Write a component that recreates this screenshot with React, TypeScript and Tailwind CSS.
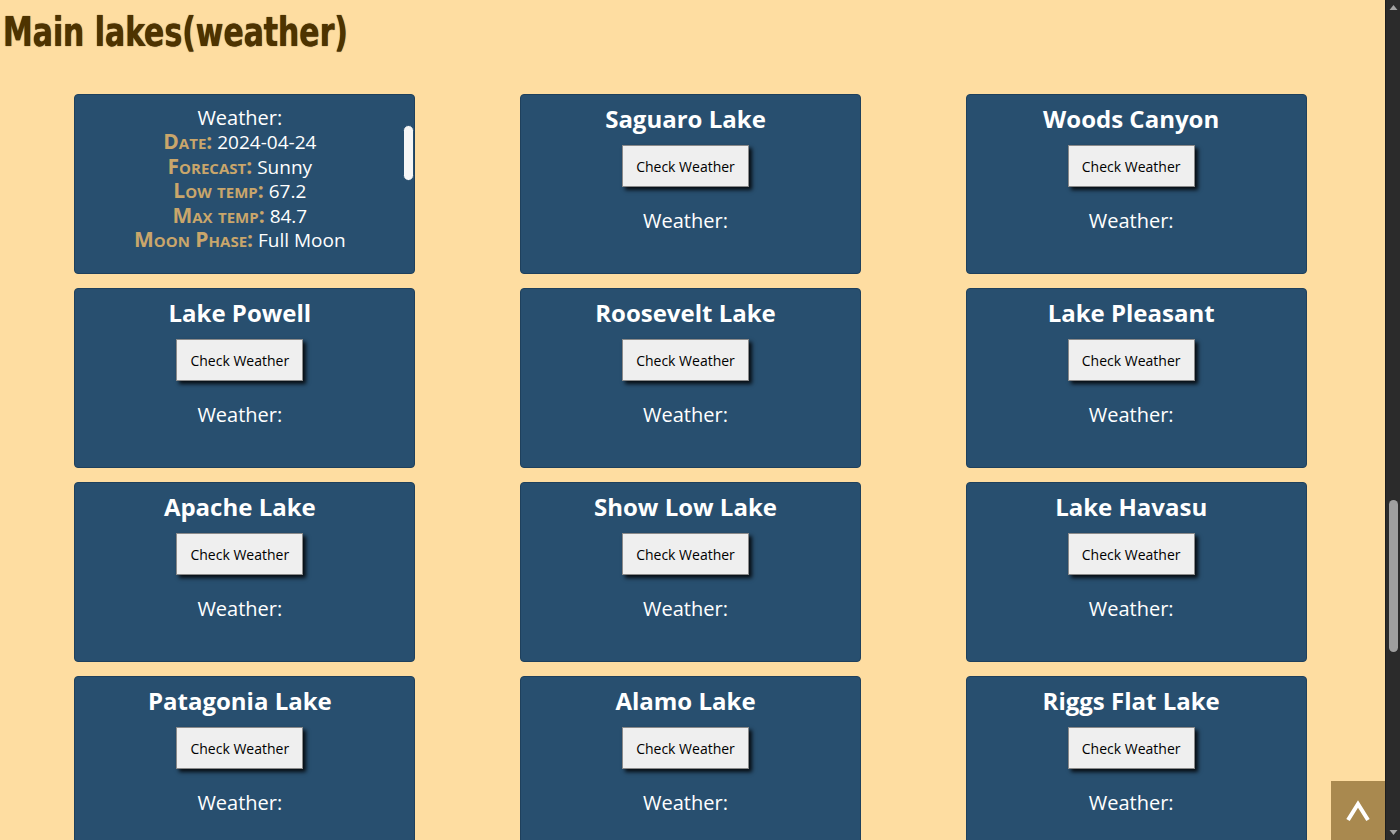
import { useEffect, useRef } from 'react';

const lakes = [
  'Canyon Lake',
  'Saguaro Lake',
  'Woods Canyon',
  'Lake Powell',
  'Roosevelt Lake',
  'Lake Pleasant',
  'Apache Lake',
  'Show Low Lake',
  'Lake Havasu',
  'Patagonia Lake',
  'Alamo Lake',
  'Riggs Flat Lake',
];

const forecast = [
  { date: '2024-04-24', sky: 'Sunny', low: '67.2', max: '84.7', moon: 'Full Moon' },
  { date: '2024-04-25', sky: 'Sunny', low: '65.8', max: '86.1', moon: 'Waning Gibbous' },
  { date: '2024-04-26', sky: 'Partly cloudy', low: '63.4', max: '81.9', moon: 'Waning Gibbous' },
];

const Label = ({ name, value }: { name: string; value: string }) => (
  <p className="text-[19px] leading-[24.5px]">
    <span className="text-[21px] leading-[1] font-bold text-[#c9a66b] [font-variant:small-caps]">{name}:</span>{' '}
    <span className="text-white">{value}</span>
  </p>
);

const LakeCard = ({ name, open }: { name: string; open?: boolean }) => {
  const ref = useRef<HTMLDivElement>(null);

  useEffect(() => {
    if (open && ref.current) ref.current.scrollTop = 103;
  }, [open]);

  return (
    <div className="relative h-[180px] w-[341px]">
      <div
        ref={ref}
        className="h-full overflow-hidden rounded-[4px] border border-[#1f405c] bg-[#284f6f] pt-[8px] pr-[10px] text-center text-white"
      >
        <h2 className="text-[24px] leading-[32px] font-bold">{name}</h2>
        <button className="mt-[10px] h-[42px] w-[127px] border border-[#8a8a8a] bg-[#efefef] text-[14px] text-black shadow-[3px_3px_4px_rgba(0,0,0,0.85)]">
          Check Weather
        </button>
        <p className="mt-[21px] text-[20px] leading-[25px]">Weather:</p>
        {open &&
          forecast.map((d) => (
            <div key={d.date} className="mb-[29px]">
              <Label name="Date" value={d.date} />
              <Label name="Forecast" value={d.sky} />
              <Label name="Low temp" value={d.low} />
              <Label name="Max temp" value={d.max} />
              <Label name="Moon Phase" value={d.moon} />
            </div>
          ))}
      </div>
      {open && (
        <div className="absolute top-[31px] right-[1px] h-[56px] w-[11px] rounded-full border border-[#284f6f] bg-[#f6f6f6]" />
      )}
    </div>
  );
};

const App = () => {
  return (
    <div className="flex h-screen w-full font-['Open_Sans','Noto_Sans',sans-serif]">
      <div className="relative h-full flex-1 overflow-hidden bg-[#fedda1]">
        <h1 className="px-[3px] pt-[10px] leading-[44px]">
          <span className="inline-block origin-left scale-x-[0.83] font-['DejaVu_Sans_Condensed','DejaVu_Sans',sans-serif] text-[40px] font-bold text-[#4e3300] [text-shadow:0_0_1px_#2b1c00]">
            Main lakes(weather)
          </span>
        </h1>
        <div className="mt-[32px] grid grid-cols-3 justify-items-center gap-y-[14px] pr-[26px] pb-[40px] pl-[22px]">
          {lakes.map((lake, i) => (
            <LakeCard key={lake} name={lake} open={i === 0} />
          ))}
        </div>
        <button className="absolute right-0 bottom-0 flex h-[59px] w-[54px] items-center justify-center bg-[#a9894f]">
          <svg width="26" height="22" viewBox="0 0 26 22" fill="none">
            <path d="M3 20 L13 4 L23 20" stroke="white" strokeWidth="4" strokeLinejoin="miter" />
          </svg>
        </button>
      </div>
      <div className="flex h-full w-[15px] flex-col items-center border-l border-[#1e1e1e] bg-[#2b2b2b]">
        <svg width="9" height="15" viewBox="0 0 9 15" className="shrink-0">
          <path d="M0.5 10 L4.5 5 L8.5 10 Z" fill="#a3a3a3" />
        </svg>
        <div className="mt-[485px] h-[152px] w-[9px] rounded-full bg-[#9f9f9f]" />
        <div className="flex-1" />
        <svg width="9" height="15" viewBox="0 0 9 15" className="shrink-0">
          <path d="M0.5 5 L4.5 10 L8.5 5 Z" fill="#a3a3a3" />
        </svg>
      </div>
    </div>
  );
};

export default App;
